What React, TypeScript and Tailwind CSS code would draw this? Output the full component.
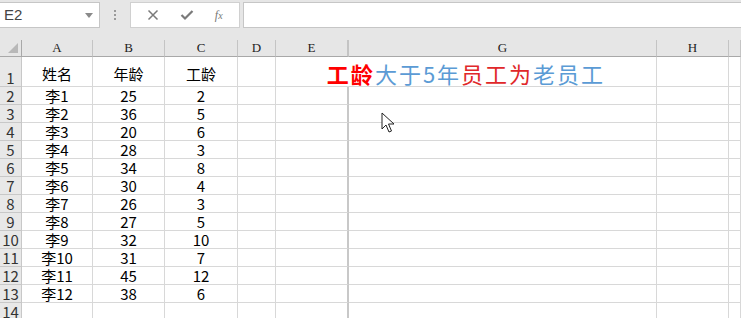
import React from "react";

const cols = ["A", "B", "C", "D", "E", "G", "H", ""];
const data: [string, string, string][] = [
  ["李1", "25", "2"],
  ["李2", "36", "5"],
  ["李3", "20", "6"],
  ["李4", "28", "3"],
  ["李5", "34", "8"],
  ["李6", "30", "4"],
  ["李7", "26", "3"],
  ["李8", "27", "5"],
  ["李9", "32", "10"],
  ["李10", "31", "7"],
  ["李11", "45", "12"],
  ["李12", "38", "6"],
];

const cjk = { fontFamily: '"Noto Sans CJK SC", sans-serif' };

const cell = "border-r border-b border-[#d8d8d8] flex items-end justify-center leading-none pb-[1px]";
const rowHead =
  "border-r border-b border-[#c8c8c8] bg-[#e8e8e8] text-[15px] text-[#333] flex items-end justify-center pb-[1px] leading-none";

const Cursor = () => (
  <svg className="absolute left-[381px] top-[112px]" width="14" height="22" viewBox="0 0 14 22">
    <path d="M1 1 L1 17 L5 13 L8 20 L10.5 19 L7.5 12 L13 12 Z" fill="#fff" stroke="#222" strokeWidth="1" strokeLinejoin="round" />
  </svg>
);

const App = () => {
  return (
    <div className="relative w-[741px] h-[318px] overflow-hidden bg-white select-none" style={cjk}>
      {/* formula bar */}
      <div className="h-[40px] bg-[#e6e6e6] flex items-start pt-[2px]">
        <div className="w-[100px] h-[26px] bg-white border border-l-0 border-[#c6c6c6] flex items-center justify-between pl-[4px] pr-[6px]">
          <span className="text-[15px] text-[#444]" style={{ fontFamily: '"Liberation Sans", sans-serif' }}>
            E2
          </span>
          <svg width="8" height="5" viewBox="0 0 8 5">
            <path d="M0 0 L8 0 L4 5 Z" fill="#8a8a8a" />
          </svg>
        </div>
        <div className="w-[30px] h-[26px] flex flex-col items-center justify-center gap-[2px]">
          <span className="w-[2px] h-[2px] bg-[#9a9a9a]" />
          <span className="w-[2px] h-[2px] bg-[#9a9a9a]" />
          <span className="w-[2px] h-[2px] bg-[#9a9a9a]" />
        </div>
        <div className="w-[110px] h-[26px] bg-white border border-[#d0d0d0] flex items-center justify-around px-[6px]">
          <svg width="12" height="12" viewBox="0 0 12 12">
            <path d="M1.5 1.5 L10.5 10.5 M10.5 1.5 L1.5 10.5" stroke="#7a7a7a" strokeWidth="1.5" />
          </svg>
          <svg width="14" height="12" viewBox="0 0 14 12">
            <path d="M1.5 6 L5 9.5 L12.5 2" stroke="#7a7a7a" strokeWidth="2.2" fill="none" />
          </svg>
          <span className="text-[12px] italic text-[#777]" style={{ fontFamily: '"Liberation Serif", serif' }}>
            f<span className="text-[10px]">x</span>
          </span>
        </div>
        <div className="ml-[3px] flex-1 h-[26px] bg-white border border-r-0 border-[#c6c6c6]" />
      </div>

      {/* grid */}
      <div className="grid grid-cols-[22px_71px_72px_73px_38px_73px_308px_72px_1fr] grid-rows-[17px_30px_repeat(13,18px)]">
        {/* header row */}
        <div className="relative bg-[#e6e6e6] border-r border-b border-[#a8a8a8]">
          <svg className="absolute right-[3px] bottom-[3px]" width="10" height="10" viewBox="0 0 10 10">
            <path d="M10 0 L10 10 L0 10 Z" fill="#b8b8b8" />
          </svg>
        </div>
        {cols.map((c, i) => (
          <div
            key={c + i}
            className={`bg-[#e6e6e6] border-b border-[#a8a8a8] flex items-center justify-center text-[13px] text-[#222] ${
              i === 4 ? "border-r-2 border-r-[#c4c4c4]" : "border-r border-r-[#c4c4c4]"
            }`}
            style={{ fontFamily: '"Liberation Serif", serif' }}
          >
            {c}
          </div>
        ))}

        {/* row 1 */}
        <div className={rowHead}>1</div>
        <div className={`${cell} text-[15px] text-black pb-[5px]`}>姓名</div>
        <div className={`${cell} text-[15px] text-black pb-[5px]`}>年龄</div>
        <div className={`${cell} text-[15px] text-black pb-[5px]`}>工龄</div>
        <div className={cell} />
        <div className="col-span-2 border-r border-b border-[#d8d8d8] flex items-end justify-center pb-[2px] text-[22px] tracking-[2px] leading-none">
          <span className="text-[#ff0000] font-bold">工龄</span>
          <span className="text-[#5b9bd5]">大于5年</span>
          <span className="text-[#e0282a]">员工为</span>
          <span className="text-[#5b9bd5]">老员工</span>
        </div>
        <div className={cell} />
        <div className={cell} />

        {/* data rows */}
        {Array.from({ length: 13 }).map((_, r) => {
          const d = data[r];
          return (
            <React.Fragment key={r}>
              <div className={rowHead}>{r + 2}</div>
              <div className={`${cell} text-[15px] text-black`}>{d ? d[0] : ""}</div>
              <div className={`${cell} text-[15px] text-black`}>{d ? d[1] : ""}</div>
              <div className={`${cell} text-[15px] text-black`}>{d ? d[2] : ""}</div>
              <div className={cell} />
              <div className={`${cell} border-r-2 border-r-[#c8c8c8]`} />
              <div className={cell} />
              <div className={cell} />
              <div className={cell} />
            </React.Fragment>
          );
        })}
      </div>

      <Cursor />
    </div>
  );
};

export default App;
